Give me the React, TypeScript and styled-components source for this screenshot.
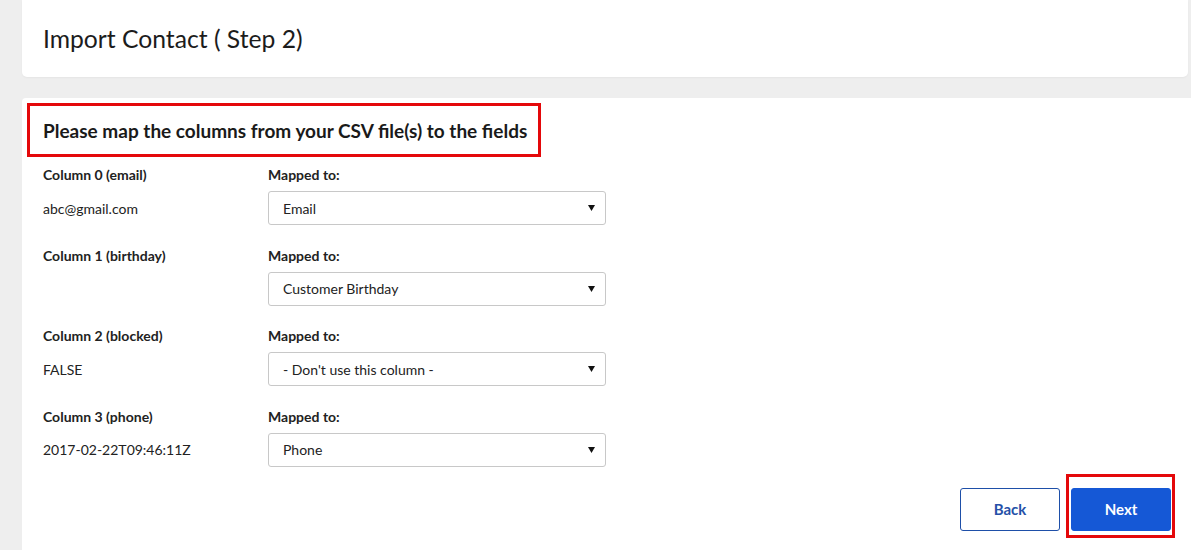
import React from 'react'
import styled, { createGlobalStyle } from 'styled-components'

type Mapping = {
  readonly column: string
  readonly sample: string
  readonly mapped: string
}

const mappings: Mapping[] = [
  { column: 'Column 0 (email)', sample: 'abc@gmail.com', mapped: 'Email' },
  { column: 'Column 1 (birthday)', sample: '', mapped: 'Customer Birthday' },
  { column: 'Column 2 (blocked)', sample: 'FALSE', mapped: "- Don't use this column -" },
  { column: 'Column 3 (phone)', sample: '2017-02-22T09:46:11Z', mapped: 'Phone' }
]

const GlobalStyle = createGlobalStyle`
  html, body {
    margin: 0;
    padding: 0;
    background: #eeeeee;
    font-family: Lato, 'Open Sans', Arial, sans-serif;
    color: #222;
  }
`

const Page = styled.div`
  padding-left: 22px;
  height: 550px;
  overflow: hidden;
  display: flex;
  flex-direction: column;
`

const HeaderCard = styled.div`
  height: 77px;
  margin-right: 3px;
  background: #fff;
  border-radius: 0 0 5px 5px;
  box-shadow: 0 1px 2px rgba(0, 0, 0, 0.04);
  display: flex;
  align-items: center;
  padding-left: 21px;
  box-sizing: border-box;
`

const Title = styled.h1`
  margin: 0;
  font-size: 24.7px;
  font-weight: 400;
  color: #1c1c1c;
`

const BodyCard = styled.div`
  margin-top: 21px;
  flex: 1;
  background: #fff;
  border-radius: 4px 0 0 0;
  padding: 5px 0 0 5px;
  display: flex;
  flex-direction: column;
`

const Highlight = styled.div<{ $inline?: boolean }>`
  border: 3px solid #e4080a;
  box-sizing: border-box;
  display: ${(p) => (p.$inline ? 'inline-flex' : 'flex')};
  align-items: center;
`

const HeadingBox = styled(Highlight)`
  width: 514px;
  height: 54px;
  padding-left: 13px;
`

const Heading = styled.h2`
  margin: 0;
  font-size: 19px;
  font-weight: 700;
  color: #1a1a1a;
`

const Form = styled.div`
  display: flex;
  flex-direction: column;
  gap: 22.5px;
  margin-top: 10px;
  padding-left: 16px;
`

const Row = styled.div`
  display: grid;
  grid-template-columns: 225px 338px;
  grid-template-rows: 16px 34px;
  row-gap: 8px;
  align-items: center;
`

const Label = styled.div`
  font-size: 14px;
  font-weight: 700;
  line-height: 16px;
  color: #222;
`

const Sample = styled.div`
  font-size: 14px;
  color: #222;
`

const SelectBox = styled.div`
  height: 34px;
  box-sizing: border-box;
  border: 1px solid #c8c8c8;
  border-radius: 3px;
  padding: 0 10px 0 14px;
  display: flex;
  align-items: center;
  justify-content: space-between;
  font-size: 14px;
  color: #222;
`

const ButtonRow = styled.div`
  display: flex;
  justify-content: flex-end;
  align-items: center;
  gap: 6px;
  margin-top: 7px;
  padding-right: 16px;
`

const NextBox = styled(Highlight)`
  padding: 11px 1px 4px 2px;
`

const Button = styled.button<{ $primary?: boolean }>`
  width: 100px;
  height: 43px;
  border-radius: 3px;
  font-family: inherit;
  font-size: 15px;
  font-weight: 700;
  cursor: pointer;
  border: 1px solid ${(p) => (p.$primary ? '#1558d6' : '#1e4fa8')};
  background: ${(p) => (p.$primary ? '#1558d6' : '#fff')};
  color: ${(p) => (p.$primary ? '#fff' : '#2550a8')};
`

const BackButton = styled(Button)`
  margin-top: 7px;
`

const Caret = () => (
  <svg width="7" height="6" viewBox="0 0 7 6">
    <path d="M0 0h7L3.5 6z" fill="#111" />
  </svg>
)

export default function App(): JSX.Element {
  return (
    <>
      <GlobalStyle />
      <Page>
        <HeaderCard>
          <Title>Import Contact ( Step 2)</Title>
        </HeaderCard>
        <BodyCard>
          <HeadingBox>
            <Heading>Please map the columns from your CSV file(s) to the fields</Heading>
          </HeadingBox>
          <Form>
            {mappings.map((m) => (
              <Row key={m.column}>
                <Label>{m.column}</Label>
                <Label>Mapped to:</Label>
                <Sample>{m.sample}</Sample>
                <SelectBox>
                  <span>{m.mapped}</span>
                  <Caret />
                </SelectBox>
              </Row>
            ))}
          </Form>
          <ButtonRow>
            <BackButton>Back</BackButton>
            <NextBox $inline>
              <Button $primary>Next</Button>
            </NextBox>
          </ButtonRow>
        </BodyCard>
      </Page>
    </>
  )
}
